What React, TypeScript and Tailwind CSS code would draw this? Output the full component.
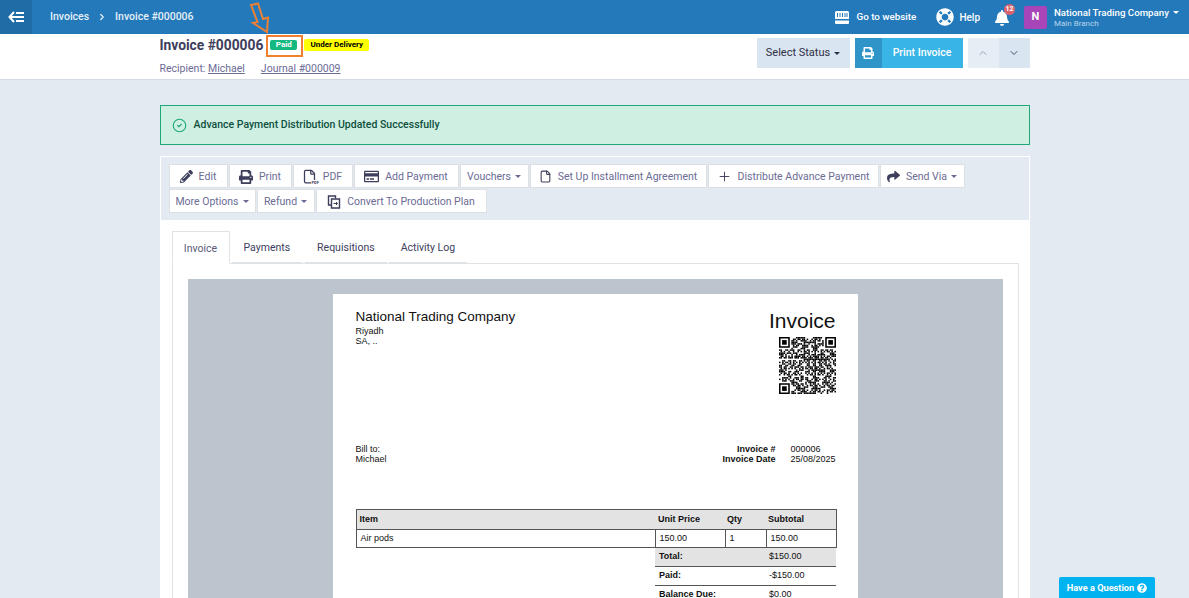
import { CircleCheck, File, Plus, ChevronUp, ChevronDown, ChevronRight } from "lucide-react";
import { FaBell, FaLifeRing, FaPencilAlt, FaPrint, FaQuestionCircle, FaRegCreditCard, FaShare } from "react-icons/fa";
import type { ReactNode } from "react";

const Caret = ({ className = "border-t-[#6b6b95]" }: { className?: string }) => (
  <span className={`ml-1 inline-block h-0 w-0 border-x-[3px] border-t-[3px] border-x-transparent ${className}`} />
);

const BackIcon = () => (
  <svg width="16" height="12" viewBox="0 0 16 12" fill="none" stroke="white" strokeWidth="2">
    <path d="M6 1 1.5 6 6 11" />
    <path d="M2 6h14M8 2h8M8 10h8" />
  </svg>
);

const StoreIcon = () => (
  <svg width="14" height="13" viewBox="0 0 14 13" fill="white">
    <path d="M1.5 0h11A1.5 1.5 0 0 1 14 1.5V8H0V1.500A1.5 1.5 0 0 1 1.500 0Z" />
    <path d="M0 9.500h14V12a1 1 0 0 1-1 1H1a1 1 0 0 1-1-1Z" />
    <path d="M2.500 2v4M5 2v4M7.500 2v4M10 2v4M12 2v4" stroke="#2379ba" strokeWidth="1" />
  </svg>
);

const PdfIcon = () => (
  <span className="relative inline-block h-[15px] w-[14px]">
    <File size={15} strokeWidth={2} className="absolute -left-[1px] top-0 text-[#3d3d5c]" />
    <span className="absolute -bottom-[1px] right-[-2px] bg-white text-[4px] font-bold leading-[5px] text-[#3d3d5c]">PDF</span>
  </span>
);

const ConvertIcon = () => (
  <svg width="14" height="14" viewBox="0 0 14 14" fill="none" stroke="#3d3d5c" strokeWidth="1.400">
    <path d="M4 10H1.500V1h7v2.500" />
    <path d="M4.500 4H12.500V13H4.500Z" />
    <path d="M6.500 8.500H10.500M9 7l1.500 1.500L9 10" strokeWidth="1" />
  </svg>
);

// finder squares are fixed, the rest is a stable pseudo random fill
const QrCode = () => {
  const n = 37;
  const cells: ReactNode[] = [];
  const inFinder = (x: number, y: number) =>
    (x < 8 && y < 8) || (x >= n - 8 && y < 8) || (x < 8 && y >= n - 8);
  for (let y = 0; y < n; y++) {
    for (let x = 0; x < n; x++) {
      if (inFinder(x, y)) continue;
      const v = (x * 7 + y * 13 + x * y * 3 + ((x ^ y) * 5)) % 11;
      if (v < 6) cells.push(<rect key={`${x}-${y}`} x={x} y={y} width="1" height="1" />);
    }
  }
  const finder = (x: number, y: number) => (
    <g key={`f${x}${y}`}>
      <path d={`M${x} ${y}h7v7h-7Z M${x + 1} ${y + 1}v5h5v-5Z`} fillRule="evenodd" />
      <rect x={x + 2} y={y + 2} width="3" height="3" />
    </g>
  );
  return (
    <svg width="57" height="57" viewBox="0 0 37 37" fill="#000">
      {cells}
      {finder(0, 0)}
      {finder(30, 0)}
      {finder(0, 30)}
    </svg>
  );
};

const ToolBtn = ({ icon, label, caret, width }: { icon?: ReactNode; label: string; caret?: boolean; width: string }) => (
  <div className={`flex h-[24px] items-center justify-center whitespace-nowrap border border-[#dcdfe3] bg-white pt-[1px] text-[10.500px] text-[#6b6b95] ${width}`}>
    {icon && <span className="mr-[6px] flex items-center text-[#3d3d5c]">{icon}</span>}
    <span>{label}</span>
    {caret && <Caret />}
  </div>
);

const Tab = ({ label, active }: { label: string; active?: boolean }) =>
  active ? (
    <div className="z-10 -mb-px flex h-[33px] w-[58px] items-center justify-center border border-b-white border-[#dfe3e6] bg-white pt-[2px] text-[#5a5a78]">
      {label}
    </div>
  ) : (
    <div className="flex h-[32px] items-center border-b border-[#dfe3e6] px-[12px] pt-[2px] text-[#3d3d5c]">{label}</div>
  );

export default function App() {
  return (
    <div className="relative h-[598px] w-[1189px] overflow-hidden bg-[#e4eaf2] font-['Roboto',sans-serif]">
      <header className="flex h-[34px] items-center bg-[#2379ba] text-white">
        <div className="flex h-full w-[32px] items-center justify-center bg-[#1f6ca6]">
          <BackIcon />
        </div>
        <div className="ml-[18px] flex items-center whitespace-nowrap text-[10.500px] font-medium text-[#e6f0f8]">
          <span>Invoices</span>
          <ChevronRight size={10} strokeWidth={3} className="mx-[8px]" />
          <span>Invoice #000006</span>
        </div>
        <div className="ml-auto flex items-center">
          <StoreIcon />
          <span className="ml-[7px] whitespace-nowrap text-[9.800px] font-medium">Go to website</span>
          <FaLifeRing size={18} className="ml-[20px]" />
          <span className="ml-[5px] text-[10px] font-medium">Help</span>
          <div className="relative ml-[14px] h-[18px] w-[16px]">
            <FaBell size={16} className="mt-[2px]" />
            <span className="absolute -right-[5px] -top-[4px] flex h-[11px] w-[11px] items-center justify-center rounded-full bg-[#d9636e] text-[7px] font-bold">12</span>
          </div>
          <div className="ml-[14px] flex h-[23px] w-[23px] items-center justify-center rounded-[2px] bg-[#a845b8] text-[11px] font-bold">N</div>
          <div className="ml-[7px] mr-[11px] w-[124px]">
            <div className="flex items-center whitespace-nowrap text-[9.700px] font-medium leading-[13px]">
              National Trading Company
              <Caret className="border-t-white" />
            </div>
            <div className="text-[8px] leading-[10px] text-[#b9d5ea]">Main Branch</div>
          </div>
        </div>
      </header>

      <div className="h-[46px] border-b border-[#d5dbe3] bg-white">
        <div className="mx-auto flex w-[870px] justify-between">
          <div>
            <div className="mt-[1px] flex h-[20px] items-center">
              <span className="text-[13.800px] font-bold text-[#3d3d5c]">Invoice #000006</span>
              <span className="ml-[7px] flex h-[10px] w-[27px] items-center justify-center rounded-[2px] bg-[#13b981] text-[8px] font-bold text-white">Paid</span>
              <span className="ml-[7px] flex h-[12px] w-[65px] items-center justify-center rounded-[2px] bg-[#ffff00] text-[8px] font-bold text-black">Under Delivery</span>
            </div>
            <div className="mt-[6px] flex text-[10.500px] text-[#6b6b95]">
              <span>
                Recipient: <span className="underline">Michael</span>
              </span>
              <span className="ml-[16px] underline">Journal #000009</span>
            </div>
          </div>
          <div className="mr-0 mt-[4px] flex h-[30px]">
            <div className="flex w-[93px] items-center justify-center bg-[#d9e5f1] text-[11px] text-[#2f2f45]">
              Select Status
              <Caret className="border-t-[#2f2f45]" />
            </div>
            <div className="ml-[5px] flex w-[108px] text-white">
              <div className="flex w-[27px] items-center justify-center bg-[#2f95c9]">
                <FaPrint size={12} />
              </div>
              <div className="flex flex-1 items-center justify-center bg-[#38b4e6] text-[10.500px] font-medium">Print Invoice</div>
            </div>
            <div className="ml-[5px] flex w-[62px]">
              <div className="flex w-[31px] items-center justify-center bg-[#e6edf5] text-[#9aa3b5]">
                <ChevronUp size={12} strokeWidth={2} />
              </div>
              <div className="flex w-[31px] items-center justify-center bg-[#d9e5f1] text-[#4a5068]">
                <ChevronDown size={12} strokeWidth={2} />
              </div>
            </div>
          </div>
        </div>
      </div>

      <main className="mx-auto w-[870px]">
        <div className="mt-[25px] flex h-[40px] items-center border border-[#1fa978] bg-[#cfefe3] pl-[11px] text-[10.500px] font-medium text-[#0e4f3d]">
          <CircleCheck size={15} strokeWidth={1.800} className="mr-[7px] text-[#1fa978]" />
          Advance Payment Distribution Updated Successfully
        </div>

        <section className="mt-[11px] border-x border-t border-white bg-white">
          <div className="h-[63px] bg-[#e4eaf2] pl-[8px] pt-[7px]">
            <div className="flex gap-px">
              <ToolBtn width="w-[59px]" icon={<FaPencilAlt size={13} />} label="Edit" />
              <ToolBtn width="w-[63px]" icon={<FaPrint size={14} />} label="Print" />
              <ToolBtn width="w-[60px]" icon={<PdfIcon />} label="PDF" />
              <ToolBtn width="w-[105px]" icon={<FaRegCreditCard size={15} />} label="Add Payment" />
              <ToolBtn width="w-[69px]" label="Vouchers" caret />
              <ToolBtn width="w-[177px]" icon={<File size={13} strokeWidth={2} />} label="Set Up Installment Agreement" />
              <ToolBtn width="w-[171px]" icon={<Plus size={15} strokeWidth={1.500} />} label="Distribute Advance Payment" />
              <ToolBtn width="w-[85px]" icon={<FaShare size={13} />} label="Send Via" caret />
            </div>
            <div className="mt-px flex gap-px">
              <ToolBtn width="w-[87px]" label="More Options" caret />
              <ToolBtn width="w-[58px]" label="Refund" caret />
              <ToolBtn width="w-[171px]" icon={<ConvertIcon />} label="Convert To Production Plan" />
            </div>
          </div>

          <div className="pl-[11px] pr-[10px] pt-[11px]">
            <div className="flex text-[10.500px]">
              <Tab label="Invoice" active />
              <div className="ml-[2px] flex">
                <Tab label="Payments" />
              </div>
              <div className="ml-[3px] flex">
                <Tab label="Requisitions" />
              </div>
              <div className="ml-[2px] flex">
                <Tab label="Activity Log" />
              </div>
            </div>
            <div className="h-[340px] border border-[#dfe3e6] px-[15px] pt-[15px]">
              <div className="h-[330px] bg-[#bcc4ce] pt-[15px]">
                <div className="mx-auto h-[320px] w-[525px] bg-white pl-[23px] pr-[22px] font-['Liberation_Sans',Arial,sans-serif] text-[#111]">
                  <div className="flex justify-between">
                    <div className="pt-[14px]">
                      <div className="text-[13.500px] leading-[18px]">National Trading Company</div>
                      <div className="text-[9px] leading-[10px]">Riyadh</div>
                      <div className="text-[9px] leading-[10px]">SA, ..</div>
                    </div>
                    <div className="flex flex-col items-end pt-[15px]">
                      <div className="text-[21px] leading-[24px]">Invoice</div>
                      <div className="mt-[4px]">
                        <QrCode />
                      </div>
                    </div>
                  </div>
                  <div className="mt-[50px] flex justify-between text-[9px] leading-[10px]">
                    <div>
                      <div>Bill to:</div>
                      <div>Michael</div>
                    </div>
                    <div className="flex">
                      <div className="text-right font-bold">
                        <div>Invoice #</div>
                        <div>Invoice Date</div>
                      </div>
                      <div className="ml-[15px] w-[45px]">
                        <div>000006</div>
                        <div>25/08/2025</div>
                      </div>
                    </div>
                  </div>
                  <table className="mt-[45px] w-[480px] table-fixed border-collapse text-[9px]">
                    <colgroup>
                      <col className="w-[299px]" />
                      <col className="w-[70px]" />
                      <col className="w-[41px]" />
                      <col className="w-[70px]" />
                    </colgroup>
                    <thead>
                      <tr className="h-[20px] bg-[#e3e3e3] text-left font-bold">
                        <th className="border-y border-l border-[#555] pl-[3px]">Item</th>
                        <th className="border-y border-[#555] pl-[3px]">Unit Price</th>
                        <th className="border-y border-[#555] pl-[2px]">Qty</th>
                        <th className="border-y border-r border-[#555] pl-[2px]">Subtotal</th>
                      </tr>
                    </thead>
                    <tbody>
                      <tr className="h-[18px]">
                        <td className="border border-[#555] pl-[4px]">Air pods</td>
                        <td className="border border-[#555] pl-[4px]">150.00</td>
                        <td className="border border-[#555] pl-[4px]">1</td>
                        <td className="border border-[#555] pl-[4px]">150.00</td>
                      </tr>
                      <tr className="h-[19px]">
                        <td />
                        <td colSpan={2} className="border-b border-[#555] bg-[#e3e3e3] pl-[4px] font-bold">Total:</td>
                        <td className="border-b border-[#555] bg-[#e3e3e3] pl-[3px]">$150.00</td>
                      </tr>
                      <tr className="h-[19px]">
                        <td />
                        <td colSpan={2} className="border-b border-[#555] pl-[4px] font-bold">Paid:</td>
                        <td className="border-b border-[#555] pl-[3px]">-$150.00</td>
                      </tr>
                      <tr className="h-[18px]">
                        <td />
                        <td colSpan={2} className="pl-[4px] font-bold">Balance Due:</td>
                        <td className="pl-[3px]">$0.00</td>
                      </tr>
                    </tbody>
                  </table>
                </div>
              </div>
            </div>
          </div>
        </section>
      </main>

      {/* annotation drawn over the screenshot */}
      <div className="absolute left-[266px] top-[35px] h-[22px] w-[37px] border-2 border-[#f07f2e]" />
      <svg className="absolute left-[249px] top-[2px]" width="22" height="33" viewBox="0 0 22 33" fill="none" stroke="#ee8033" strokeWidth="2">
        <path d="M2 3 9 1.500 14 17 19 15.500 18 30 4 21 8.500 20Z" />
      </svg>

      <div className="absolute bottom-0 left-[1059px] flex h-[21px] w-[96px] items-center justify-center rounded-t-[2px] bg-[#00b2f0] pt-[1px] text-[9.200px] font-bold text-white">
        Have a Question
        <FaQuestionCircle size={10} className="ml-[3px]" />
      </div>
    </div>
  );
}
